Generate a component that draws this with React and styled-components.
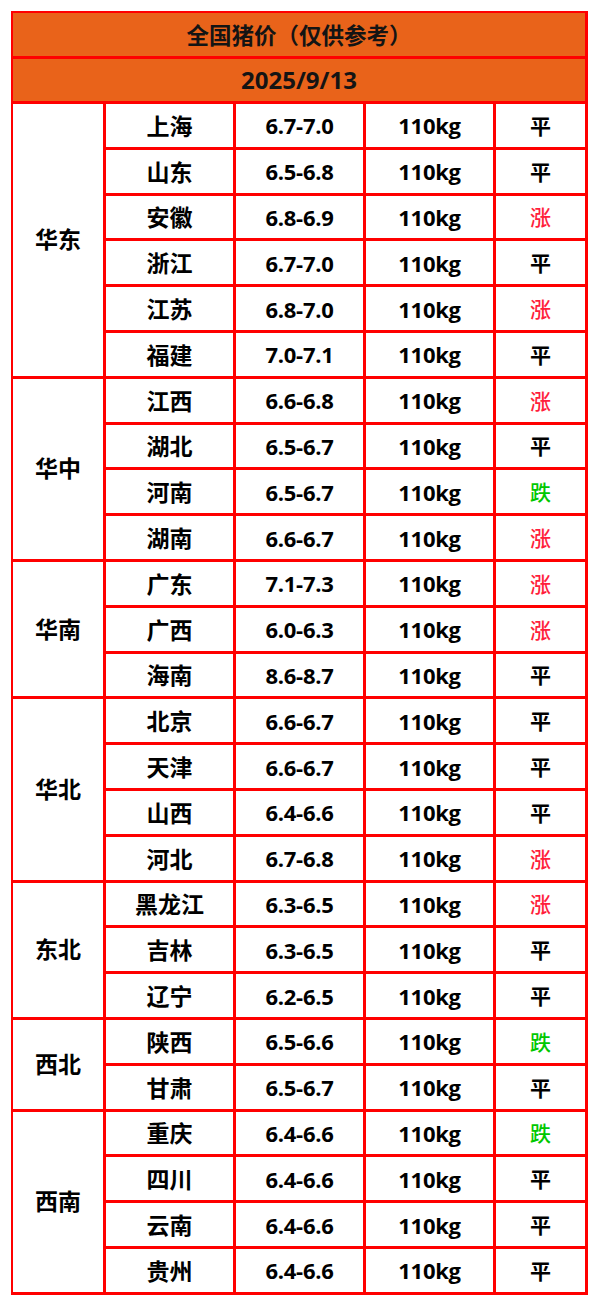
import React from 'react';
import styled, { createGlobalStyle } from 'styled-components';

const GlobalStyle = createGlobalStyle`
  html, body {
    margin: 0;
    padding: 0;
    background: #ffffff;
  }
  body {
    font-family: "Noto Sans CJK SC", "Open Sans", sans-serif;
  }
`;

const Page = styled.div`
  width: 600px;
  height: 1306px;
  padding: 11px 0 0 11px;
  box-sizing: border-box;
`;

const Sheet = styled.div`
  display: grid;
  grid-template-columns: 90px 127px 127px 127px 89px;
  grid-template-rows: 43px 42px;
  grid-auto-rows: 42.8px;
  gap: 3px;
  width: 577px;
  box-sizing: border-box;
  padding: 2px 3px 3px 2px;
  background: #ff0000;
`;

const Cell = styled.div`
  display: flex;
  align-items: center;
  justify-content: center;
  background: #ffffff;
  color: #000000;
  font-family: "Noto Sans CJK SC", sans-serif;
  font-weight: 700;
  font-size: 23px;
  line-height: 1;
  white-space: nowrap;
`;

const Banner = styled(Cell)`
  grid-column: 1 / -1;
  background: #e9631a;
  color: #141414;
  font-size: ${(p) => (p.$date ? '24px' : '22.5px')};
  font-family: ${(p) =>
    p.$date ? '"Open Sans", "Noto Sans CJK SC", sans-serif' : '"Noto Sans CJK SC", sans-serif'};
`;

const Region = styled(Cell)`
  grid-column: 1;
  grid-row: span ${(p) => p.$span};
  padding-bottom: 2px;
`;

const Num = styled(Cell)`
  font-family: "Open Sans", "Noto Sans CJK SC", sans-serif;
  font-size: 22px;
  letter-spacing: -0.3px;
`;

const trendColor = { 涨: '#ff1e3c', 跌: '#00c800', 平: '#000000' };

const Trend = styled(Cell)`
  font-size: 21px;
  font-weight: ${(p) => (p.$t === '平' ? 700 : 500)};
  color: ${(p) => trendColor[p.$t]};
`;

const groups = [
  {
    name: '华东',
    rows: [
      ['上海', '6.7-7.0', '平'],
      ['山东', '6.5-6.8', '平'],
      ['安徽', '6.8-6.9', '涨'],
      ['浙江', '6.7-7.0', '平'],
      ['江苏', '6.8-7.0', '涨'],
      ['福建', '7.0-7.1', '平'],
    ],
  },
  {
    name: '华中',
    rows: [
      ['江西', '6.6-6.8', '涨'],
      ['湖北', '6.5-6.7', '平'],
      ['河南', '6.5-6.7', '跌'],
      ['湖南', '6.6-6.7', '涨'],
    ],
  },
  {
    name: '华南',
    rows: [
      ['广东', '7.1-7.3', '涨'],
      ['广西', '6.0-6.3', '涨'],
      ['海南', '8.6-8.7', '平'],
    ],
  },
  {
    name: '华北',
    rows: [
      ['北京', '6.6-6.7', '平'],
      ['天津', '6.6-6.7', '平'],
      ['山西', '6.4-6.6', '平'],
      ['河北', '6.7-6.8', '涨'],
    ],
  },
  {
    name: '东北',
    rows: [
      ['黑龙江', '6.3-6.5', '涨'],
      ['吉林', '6.3-6.5', '平'],
      ['辽宁', '6.2-6.5', '平'],
    ],
  },
  {
    name: '西北',
    rows: [
      ['陕西', '6.5-6.6', '跌'],
      ['甘肃', '6.5-6.7', '平'],
    ],
  },
  {
    name: '西南',
    rows: [
      ['重庆', '6.4-6.6', '跌'],
      ['四川', '6.4-6.6', '平'],
      ['云南', '6.4-6.6', '平'],
      ['贵州', '6.4-6.6', '平'],
    ],
  },
];

const App = () => {
  return (
    <>
      <GlobalStyle />
      <Page>
        <Sheet>
          <Banner>全国猪价（仅供参考）</Banner>
          <Banner $date>2025/9/13</Banner>
          {groups.map((g) => (
            <React.Fragment key={g.name}>
              <Region $span={g.rows.length}>{g.name}</Region>
              {g.rows.map(([city, price, trend]) => (
                <React.Fragment key={city}>
                  <Cell>{city}</Cell>
                  <Num>{price}</Num>
                  <Num>110kg</Num>
                  <Trend $t={trend}>{trend}</Trend>
                </React.Fragment>
              ))}
            </React.Fragment>
          ))}
        </Sheet>
      </Page>
    </>
  );
};

export default App;
